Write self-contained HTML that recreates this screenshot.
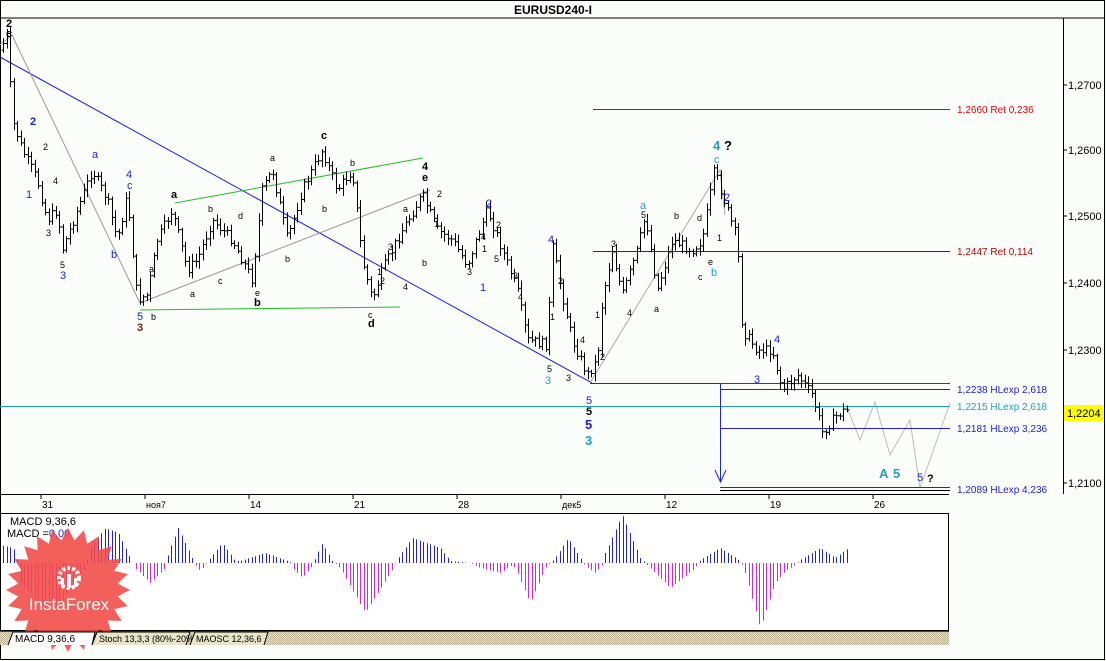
<!DOCTYPE html>
<html><head><meta charset="utf-8">
<style>
html,body{margin:0;padding:0;background:#fbfdfb;}
body{width:1106px;height:661px;overflow:hidden;position:relative;font-family:"Liberation Sans",sans-serif;}
svg{position:absolute;left:0;top:0;}
text{font-family:"Liberation Sans",sans-serif;}
</style></head><body>
<svg id="s" width="1106" height="661" viewBox="0 0 1106 661" xmlns="http://www.w3.org/2000/svg">
<defs>
<pattern id="chk" width="2" height="2" patternUnits="userSpaceOnUse">
<rect width="2" height="2" fill="#e8e4c8"/><rect width="1" height="1" fill="#b8b090"/><rect x="1" y="1" width="1" height="1" fill="#b8b090"/>
</pattern>
</defs>
<rect x="0.5" y="0.5" width="1104" height="659" fill="#fbfdfb" stroke="#000"/>
<line x1="0" y1="18" x2="1105" y2="18" stroke="#000"/>
<text x="553" y="14" font-size="12" font-weight="bold" text-anchor="middle">EURUSD240-I</text>
<line x1="1063.5" y1="18" x2="1063.5" y2="494" stroke="#000"/>
<line x1="0" y1="494.5" x2="949" y2="494.5" stroke="#000"/>
<g font-size="11" fill="#000">
<line x1="1063" y1="85" x2="1067" y2="85" stroke="#000"/><text x="1068" y="89">1,2700</text>
<line x1="1063" y1="150" x2="1067" y2="150" stroke="#000"/><text x="1068" y="154">1,2600</text>
<line x1="1063" y1="216" x2="1067" y2="216" stroke="#000"/><text x="1068" y="220">1,2500</text>
<line x1="1063" y1="283" x2="1067" y2="283" stroke="#000"/><text x="1068" y="287">1,2400</text>
<line x1="1063" y1="350" x2="1067" y2="350" stroke="#000"/><text x="1068" y="354">1,2300</text>
<line x1="1063" y1="483" x2="1067" y2="483" stroke="#000"/><text x="1068" y="487">1,2100</text>
<rect x="1064" y="405" width="39" height="16" fill="#ffff00"/><text x="1067" y="417">1,2204</text>
</g>
<g font-size="10" fill="#000">
<g stroke="#000"><line x1="41" y1="495" x2="41" y2="499"/><line x1="145" y1="495" x2="145" y2="499"/><line x1="249" y1="495" x2="249" y2="499"/><line x1="353" y1="495" x2="353" y2="499"/><line x1="457" y1="495" x2="457" y2="499"/><line x1="561" y1="495" x2="561" y2="499"/><line x1="665" y1="495" x2="665" y2="499"/><line x1="769" y1="495" x2="769" y2="499"/><line x1="873" y1="495" x2="873" y2="499"/></g>
<text x="42" y="508">31</text><text x="146" y="508" font-size="9">ноя7</text><text x="250" y="508">14</text><text x="354" y="508">21</text><text x="458" y="508">28</text><text x="562" y="508" font-size="9">дек5</text><text x="666" y="508">12</text><text x="770" y="508">19</text><text x="874" y="508">26</text>
</g>
<line x1="0" y1="57" x2="592" y2="383" stroke="#2020e0"/>
<line x1="175" y1="203" x2="423" y2="158" stroke="#20c020"/>
<line x1="140" y1="310" x2="400" y2="307" stroke="#20c020"/>
<polyline points="0,45 12,35 140,303" fill="none" stroke="#999"/>
<polyline points="140,303 430,190" fill="none" stroke="#999"/>
<polyline points="590,383 720,170 725,215" fill="none" stroke="#aaa"/>
<polyline points="848,410 860,440 875,402 890,455 910,420 920,488 950,403" fill="none" stroke="#bbb"/>
<line x1="593" y1="109.5" x2="950" y2="109.5" stroke="#e00000"/>
<line x1="593" y1="251.5" x2="950" y2="251.5" stroke="#a00000"/>
<line x1="590" y1="383.5" x2="720" y2="383.5" stroke="#2020e0"/>
<line x1="720" y1="383.5" x2="950" y2="383.5" stroke="#e00000"/>
<line x1="720" y1="389.5" x2="950" y2="389.5" stroke="#2020e0"/>
<line x1="0" y1="406.5" x2="950" y2="406.5" stroke="#20a0c0"/>
<line x1="720" y1="428.5" x2="950" y2="428.5" stroke="#2020e0"/>
<line x1="720" y1="487.5" x2="950" y2="487.5" stroke="#2020e0"/>
<line x1="720" y1="490.5" x2="950" y2="490.5" stroke="#000"/>
<line x1="720.5" y1="383" x2="720.5" y2="482" stroke="#2020e0"/>
<polyline points="715,470 720.5,482 726,470" fill="none" stroke="#2020e0"/>
<g font-size="10">
<text x="957" y="113" fill="#e00000">1,2660 Ret 0,236</text>
<text x="957" y="255" fill="#c00000">1,2447 Ret 0,114</text>
<text x="957" y="393" fill="#2020e0">1,2238 HLexp 2,618</text>
<text x="957" y="410" fill="#20a0c0">1,2215 HLexp 2,618</text>
<text x="957" y="432" fill="#2020e0">1,2181 HLexp 3,236</text>
<text x="957" y="493" fill="#2020e0">1,2089 HLexp 4,236</text>
</g>
<g id="bars" stroke="#000" stroke-width="1" fill="none"></g>
<g font-size="11" font-weight="bold">
<text x="6" y="27">2</text><text x="6" y="37">c</text>
<text x="30" y="125" fill="#2020e0">2</text><text x="26" y="198" fill="#2020e0" font-weight="normal">1</text>
<text x="60" y="268" fill="#000" font-weight="normal" font-size="9">5</text><text x="60" y="279" fill="#2020e0" font-weight="normal">3</text>
<text x="126" y="178" fill="#2020e0" font-weight="normal">4</text><text x="127" y="189" fill="#2020e0" font-weight="normal">c</text>
<text x="92" y="158" fill="#2020e0" font-weight="normal">a</text><text x="111" y="258" fill="#2020e0" font-weight="normal">b</text>
<text x="137" y="320" fill="#2020e0" font-weight="normal">5</text><text x="137" y="331" fill="#802000">3</text>
<text x="171" y="198">a</text><text x="254" y="306">b</text>
<text x="321" y="139">c</text><text x="368" y="327">d</text><text x="422" y="170">4</text><text x="422" y="181">e</text>
<text x="486" y="207" fill="#2020e0" font-weight="normal">2</text><text x="480" y="291" fill="#2020e0" font-weight="normal">1</text>
<text x="548" y="243" fill="#2020e0" font-weight="normal">4</text><text x="545" y="384" fill="#20a0c0" font-weight="normal">3</text>
<text x="586" y="404" fill="#2020e0" font-weight="normal">5</text><text x="586" y="415">5</text>
<text x="585" y="429" fill="#2020e0" font-size="13">5</text><text x="585" y="445" fill="#20a0c0" font-size="13">3</text>
<text x="640" y="209" fill="#20a0c0" font-weight="normal">a</text>
<text x="713" y="150" fill="#20a0c0" font-size="13">4</text><text x="724" y="150" font-size="13">?</text>
<text x="714" y="163" fill="#20a0c0" font-weight="normal">c</text>
<text x="724" y="201" fill="#2020e0" font-weight="normal">2</text><text x="711" y="276" fill="#20a0c0" font-weight="normal">b</text>
<text x="774" y="343" fill="#2020e0" font-weight="normal">4</text><text x="754" y="383" fill="#2020e0" font-weight="normal">3</text>
<text x="879" y="478" fill="#20a0c0" font-size="13">A</text><text x="893" y="478" fill="#20a0c0" font-size="13">5</text>
<text x="917" y="481" fill="#2020e0" font-weight="normal">5</text><text x="927" y="482">?</text>
</g>
<g font-size="9" fill="#000">
<text x="53" y="184">4</text><text x="46" y="236">3</text><text x="43" y="150">2</text><text x="149" y="272">a</text><text x="151" y="320">b</text>
<text x="190" y="297">a</text><text x="208" y="212">b</text><text x="218" y="284">c</text><text x="238" y="219">d</text><text x="255" y="296">e</text>
<text x="270" y="161">a</text><text x="285" y="262">b</text><text x="350" y="166">b</text><text x="322" y="212">b</text>
<text x="403" y="212">a</text><text x="422" y="266">b</text><text x="388" y="250">3</text><text x="403" y="290">4</text><text x="377" y="275">1</text><text x="380" y="284">2</text><text x="368" y="318">c</text>
<text x="437" y="197">2</text><text x="434" y="227">1</text><text x="467" y="275">3</text><text x="481" y="240">4</text><text x="496" y="228">2</text><text x="482" y="252">1</text><text x="494" y="262">5</text><text x="513" y="279">3</text><text x="518" y="300">4</text>
<text x="558" y="284">2</text><text x="550" y="320">1</text><text x="547" y="372">5</text><text x="566" y="381">3</text><text x="580" y="343">4</text>
<text x="595" y="318">1</text><text x="600" y="360">2</text><text x="611" y="247">3</text><text x="627" y="316">4</text><text x="641" y="218">5</text><text x="654" y="312">a</text><text x="674" y="219">b</text><text x="698" y="280">c</text><text x="697" y="221">d</text><text x="708" y="265">e</text><text x="717" y="241">1</text>
</g>
<rect x="0.5" y="513.5" width="948" height="117" fill="#fff" stroke="#000"/>
<line x1="0" y1="631.5" x2="949" y2="631.5" stroke="#444"/>
<rect x="0" y="632" width="949" height="13" fill="url(#chk)"/>
<g id="macd"></g>
<text x="10" y="525" font-size="11">MACD 9,36,6</text>
<text x="7" y="537" font-size="11">MACD =<tspan fill="#2020e0">0,00</tspan></text>
<g opacity="0.88">
<polygon id="star" fill="#f24a45"/>
<g fill="#fff" transform="translate(69,578)">
<circle cx="0" cy="0" r="10" fill="none" stroke="#fff" stroke-width="4" stroke-dasharray="3 2"/>
<rect x="-2" y="-4" width="4" height="14"/>
<rect x="-8" y="0" width="3" height="9"/><rect x="5" y="0" width="3" height="9"/>
</g>
<text x="69" y="610" font-size="17" fill="#fff" text-anchor="middle">InstaForex</text>
</g>
<g font-size="10">
<path d="M8,645 L13,632 L95,632 L92,645" fill="#fff" stroke="#000"/>
<text x="15" y="642">MACD 9,36,6</text>
<path d="M92,645 L97,632 L190,632 L186,645" fill="#e8e4c8" stroke="#000"/>
<text x="99" y="642" font-size="9">Stoch 13,3,3 (80%-20%)</text>
<path d="M190,645 L195,632 L268,632 L264,645" fill="#e8e4c8" stroke="#000"/>
<text x="196" y="642" font-size="9">MAOSC 12,36,6</text>
</g>
</svg>
<script>
(function(){
var NS="http://www.w3.org/2000/svg";
var P=[[3,50],[10,35],[15,120],[25,150],[40,180],[50,220],[60,210],[65,250],[80,210],[95,170],[110,200],[120,240],[130,195],[140,300],[150,295],[160,240],[175,210],[190,270],[200,260],[215,220],[235,240],[255,280],[265,190],[275,170],[290,240],[305,190],[325,150],[340,190],[355,170],[365,260],[375,300],[385,270],[405,230],[425,195],[440,230],[455,240],[470,265],[490,210],[505,250],[520,290],[530,340],[550,345],[555,245],[565,295],[575,340],[590,375],[600,360],[605,300],[615,250],[625,295],[640,250],[648,215],[660,290],[675,240],[695,250],[705,240],[717,170],[730,210],[740,240],[745,330],[760,350],[775,350],[785,390],[800,375],[815,395],[825,432],[840,415],[848,410]];
function py(x){for(var i=0;i<P.length-1;i++){if(x>=P[i][0]&&x<=P[i+1][0]){var t=(x-P[i][0])/(P[i+1][0]-P[i][0]);return P[i][1]+t*(P[i+1][1]-P[i][1]);}}return P[P.length-1][1];}
var seed=7;function r(){seed=(seed*9301+49297)%233280;return seed/233280;}
var g=document.getElementById('bars'),d="";
var prev=py(3);
for(var x=3;x<=848;x+=3.5){var xi=Math.round(x)+0.5;var c=py(x+3)+(r()-0.5)*10;var o=prev;var hi=Math.min(o,c)-2-r()*6;var lo=Math.max(o,c)+2+r()*6;
d+="M"+xi+","+hi.toFixed(1)+"V"+lo.toFixed(1)+"M"+(xi-2)+","+o.toFixed(1)+"H"+xi+"M"+xi+","+c.toFixed(1)+"H"+(xi+2);prev=c;}
var p=document.createElementNS(NS,'path');p.setAttribute('d',d);g.appendChild(p);
var M=[[0,18],[13,15],[18,0],[20,-20],[45,-45],[60,-40],[85,-5],[90,15],[105,35],[118,30],[130,5],[135,-5],[150,-20],[165,-5],[168,10],[178,35],[192,5],[195,-2],[200,-8],[205,-2],[210,5],[222,20],[235,2],[240,2],[265,10],[290,1],[292,-5],[302,-15],[312,-3],[315,5],[322,20],[332,2],[340,-5],[365,-50],[390,-10],[398,5],[412,25],[440,15],[450,2],[470,0],[480,-5],[500,-10],[512,-2],[515,-5],[530,-40],[545,-5],[555,5],[568,25],[580,5],[585,-3],[595,-10],[602,-2],[605,10],[622,48],[640,5],[650,-5],[670,-25],[695,-5],[700,3],[720,15],[740,2],[745,-10],[760,-65],[775,-20],[785,-8],[795,-2],[800,3],[820,15],[835,5],[848,15]];
function my(x){for(var i=0;i<M.length-1;i++){if(x>=M[i][0]&&x<=M[i+1][0]){var t=(x-M[i][0])/(M[i+1][0]-M[i][0]);return M[i][1]+t*(M[i+1][1]-M[i][1]);}}return 0;}
var dp="",dn="",base=563;
for(var x=3;x<=848;x+=3.5){var v=my(x);var xi=Math.round(x)+0.5;if(v>=0)dp+="M"+xi+","+base+"V"+(base-v).toFixed(1);else dn+="M"+xi+","+base+"V"+(base-v).toFixed(1);}
var mg=document.getElementById('macd');
var a=document.createElementNS(NS,'path');a.setAttribute('d',dp);a.setAttribute('stroke','#2020e0');mg.appendChild(a);
var b=document.createElementNS(NS,'path');b.setAttribute('d',dn);b.setAttribute('stroke','#e020e0');mg.appendChild(b);
var pts=[],cx=68,cy=590,n=24;for(var i=0;i<n*2;i++){var ang=Math.PI*i/n;var rr=(i%2==0)?62:50;pts.push((cx+rr*Math.cos(ang)).toFixed(1)+","+(cy+rr*Math.sin(ang)).toFixed(1));}
document.getElementById('star').setAttribute('points',pts.join(' '));
})();
</script>
</body></html>
